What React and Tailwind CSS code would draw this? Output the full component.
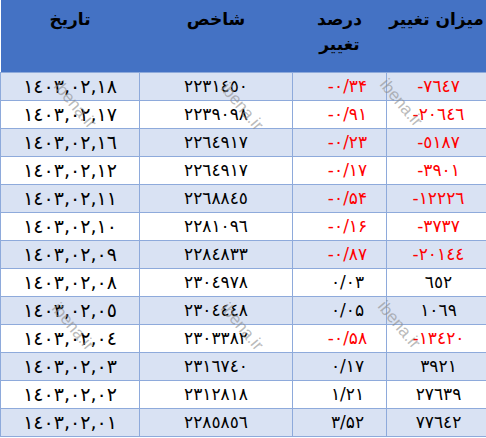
import React from 'react'

const rows = [
  { change: '-٧٦٤٧', pct: '-٠/٣۴', index: '٢٢٣١٤٥٠', date: '١٤٠٣,٠٢,١٨', neg: true },
  { change: '-٢٠٦٤٦', pct: '-٠/٩١', index: '٢٢٣٩٠٩٨', date: '١٤٠٣,٠٢,١٧', neg: true },
  { change: '-٥١٨٧', pct: '-٠/٢٣', index: '٢٢٦٤٩١٧', date: '١٤٠٣,٠٢,١٦', neg: true },
  { change: '-٣٩٠١', pct: '-٠/١٧', index: '٢٢٦٤٩١٧', date: '١٤٠٣,٠٢,١٢', neg: true },
  { change: '-١٢٢٢٦', pct: '-٠/۵۴', index: '٢٢٦٨٨٤٥', date: '١٤٠٣,٠٢,١١', neg: true },
  { change: '-٣٧٣٧', pct: '-٠/١۶', index: '٢٢٨١٠٩٦', date: '١٤٠٣,٠٢,١٠', neg: true },
  { change: '-٢٠١٤٤', pct: '-٠/٨٧', index: '٢٢٨٤٨٣٣', date: '١٤٠٣,٠٢,٠٩', neg: true },
  { change: '٦٥٢', pct: '٠/٠٣', index: '٢٣٠٤٩٧٨', date: '١٤٠٣,٠٢,٠٨', neg: false },
  { change: '١٠٦٩', pct: '٠/٠۵', index: '٢٣٠٤٤٤٨', date: '١٤٠٣,٠٢,٠٥', neg: false },
  { change: '-١٣٤٢٠', pct: '-٠/۵٨', index: '٢٣٠٣٣٨٢', date: '١٤٠٣,٠٢,٠٤', neg: true },
  { change: '٣٩٢١', pct: '٠/١٧', index: '٢٣١٦٧٤٠', date: '١٤٠٣,٠٢,٠٣', neg: false },
  { change: '٢٧٦٣٩', pct: '١/٢١', index: '٢٣١٢٨١٨', date: '١٤٠٣,٠٢,٠٢', neg: false },
  { change: '٧٧٦٤٢', pct: '٣/۵٢', index: '٢٢٨٥٨٥٦', date: '١٤٠٣,٠٢,٠١', neg: false },
]

const marks = [
  { left: 'left-[46px]', top: 'top-[76px]' },
  { left: 'left-[213px]', top: 'top-[78px]' },
  { left: 'left-[372px]', top: 'top-[74px]' },
  { left: 'left-[44px]', top: 'top-[298px]' },
  { left: 'left-[213px]', top: 'top-[298px]' },
  { left: 'left-[370px]', top: 'top-[296px]' },
]

export default function App() {
  return (
    <div className="relative w-[486px] h-[438px] bg-white overflow-hidden font-['DejaVu_Sans',sans-serif]">
      <table dir="rtl" className="table-fixed w-[486px] border-collapse">
        <colgroup>
          <col className="w-[100px]" />
          <col className="w-[94px]" />
          <col className="w-[153px]" />
          <col className="w-[139px]" />
        </colgroup>
        <thead>
          <tr className="h-[72px] bg-[#4472C4] text-[17px] font-bold text-black align-top">
            <th className="pt-[7px] leading-[25px]">میزان تغییر</th>
            <th className="pt-[7px] leading-[25px] px-6">درصد تغییر</th>
            <th className="pt-[7px] leading-[25px]">شاخص</th>
            <th className="pt-[7px] leading-[25px]">تاریخ</th>
          </tr>
        </thead>
        <tbody>
          {rows.map((r, i) => (
            <tr key={i} className={`h-[28px] text-[17px] leading-none tracking-[1.5px] ${i % 2 === 0 ? 'bg-[#D9E2F3]' : 'bg-white'}`}>
              <td className={`border border-[#8EAADB] text-center pl-[4px] ${r.neg ? 'text-[#FF0000]' : 'text-black'}`}>
                <span dir="ltr">{r.change}</span>
              </td>
              <td className={`border border-[#8EAADB] text-center pl-[16px] ${r.neg ? 'text-[#FF0000]' : 'text-black'}`}>
                <span dir="ltr">{r.pct}</span>
              </td>
              <td className="border border-[#8EAADB] text-center text-black">
                <span dir="ltr">{r.index}</span>
              </td>
              <td className="border border-[#8EAADB] text-center text-black text-[19px] tracking-[2.5px]">
                <span dir="ltr">{r.date}</span>
              </td>
            </tr>
          ))}
        </tbody>
      </table>

      {/* watermark */}
      {marks.map((m, i) => (
        <div
          key={i}
          className={`absolute ${m.left} ${m.top} w-[58px] h-[58px] flex items-center justify-center pointer-events-none`}
        >
          <span className="rotate-[50deg] text-[17px] text-[#8c8c8c]/60 font-['Liberation_Sans',sans-serif] whitespace-nowrap">
            ibena.ir
          </span>
        </div>
      ))}
    </div>
  )
}
